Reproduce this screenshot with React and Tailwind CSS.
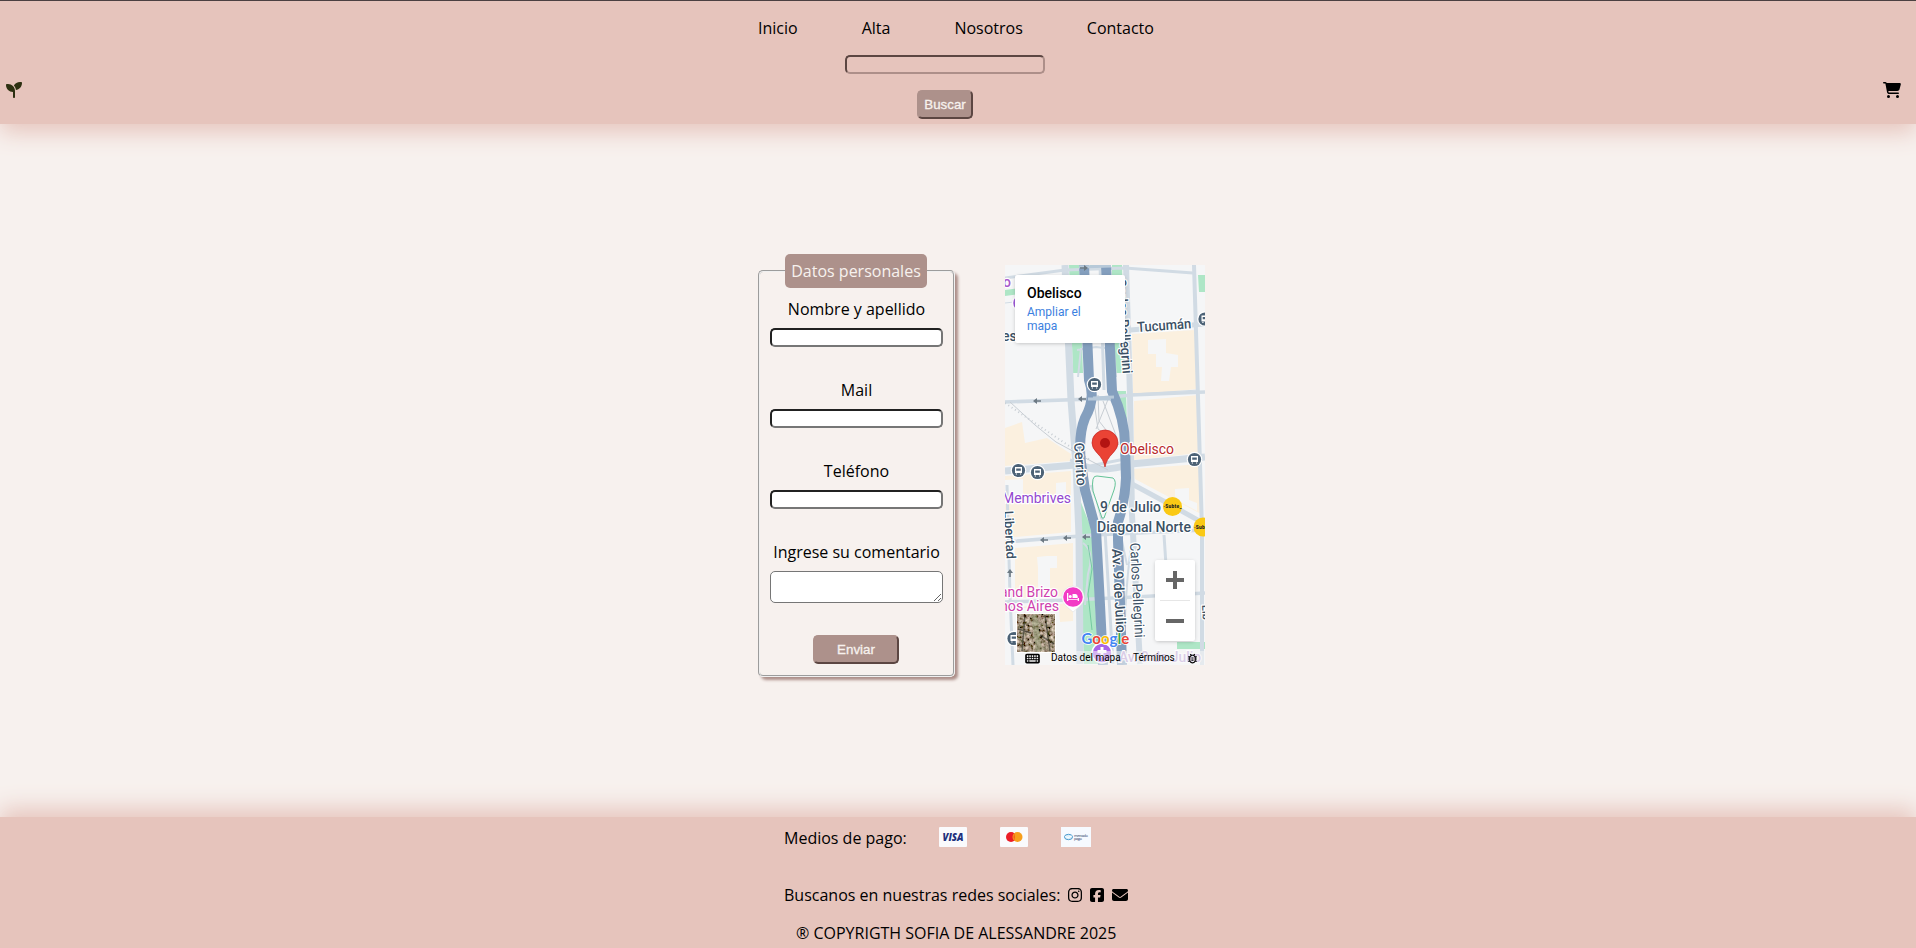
import { FaSeedling, FaCartShopping, FaInstagram, FaSquareFacebook, FaEnvelope, FaKeyboard } from 'react-icons/fa6';
import { MdOutlineBugReport } from 'react-icons/md';

const links = ['Inicio', 'Alta', 'Nosotros', 'Contacto'];

function Header() {
  return (
    <header className="z-10 flex h-[124px] shrink-0 border-t border-[#4b4041] bg-[#e6c4bc] shadow-[0_8px_22px_#e6c4bc]">
      <div className="w-[758px] pl-[6px] pt-[81px]">
        <FaSeedling className="h-4 w-4 text-[#2d3011]" />
      </div>
      <div className="w-[420px]">
        <nav className="flex gap-16 pt-[15px] text-base leading-[24px]">
          {links.map((l) => <a key={l}>{l}</a>)}
        </nav>
        <form className="ml-[87px] mt-[15px] flex w-[200px] flex-col items-center">
          <input className="h-[19px] w-full rounded-[5px] border-2 border-b-[#ad8f89] border-l-[#5c4642] border-r-[#ad8f89] border-t-[#5c4642] bg-transparent" />
          <button type="button" className="mt-4 h-[29px] w-[56px] rounded-[5px] border-2 border-b-[#5c4642] border-l-[#ad918b] border-r-[#5c4642] border-t-[#ad918b] bg-[#ad918b] font-['Liberation_Sans',sans-serif] text-[13.333px] leading-none text-[#f7f1ee] [-webkit-text-stroke:0.3px_#f7f1ee]">Buscar</button>
        </form>
      </div>
      <div className="ml-auto pr-[15px] pt-[80px]">
        <FaCartShopping className="h-[18px] w-[18px]" />
      </div>
    </header>
  );
}

function Field({ label }) {
  return (
    <label className="mb-[32px] flex flex-col items-center">
      <span className="text-base leading-[22px]">{label}</span>
      <input className="mt-[8px] h-[19px] w-[173px] rounded-[5px] border-2 border-b-[#767676] border-l-[#212121] border-r-[#767676] border-t-[#212121] bg-white" />
    </label>
  );
}

function ContactForm() {
  return (
    <form className="mt-[16px] h-[407px] w-[197px] rounded-[5px] border-2 border-[#f0f0f0] shadow-[3px_3px_3px_#ad8f89] [border-style:groove]">
      <div className="flex flex-col items-center">
        <div className="-ml-px -mt-[18px] h-[34px] w-[142px] rounded-[5px] bg-[#ad918b] text-center text-base leading-[34px] text-[#f7f1ee]">Datos personales</div>
        <div className="mt-[10px] flex flex-col items-center">
          <Field label="Nombre y apellido" />
          <Field label="Mail" />
          <Field label="Teléfono" />
          <label className="flex flex-col items-center">
            <span className="text-base leading-[22px]">Ingrese su comentario</span>
            <textarea className="mt-[8px] h-[32px] w-[173px] resize rounded-[5px] border border-[#767676] bg-white" />
          </label>
          <button type="button" className="-ml-px mt-[32px] h-[29px] w-[86px] rounded-[5px] border-2 border-b-[#5c4642] border-l-[#ad918b] border-r-[#5c4642] border-t-[#ad918b] bg-[#ad918b] font-['Liberation_Sans',sans-serif] text-[13.333px] leading-none text-[#f7f1ee] [-webkit-text-stroke:0.3px_#f7f1ee]">Enviar</button>
        </div>
      </div>
    </form>
  );
}

function Stop({ x, y }) {
  return (
    <g transform={`translate(${x} ${y})`}>
      <circle r="7.800" fill="#fff" />
      <circle r="6.600" fill="#4c6276" />
      <path d="M-3.500-3.500h7v6h-7zM-2.300-1.900v2.200h4.600v-2.200zM-2.700 3h1.200v1h-1.200zM1.500 3h1.200v1H1.500z" fill="#fff" fillRule="evenodd" />
    </g>
  );
}

function Arrow({ x, y, r = 180 }) {
  return <path d="M-4-.8H0V-3L4 0L0 3V.8H-4z" transform={`translate(${x} ${y}) rotate(${r})`} fill="#6c7983" />;
}

function MapDrawing() {
  return (
    <svg width="200" height="400" viewBox="0 0 200 400" className="block font-['Roboto',sans-serif]" fontSize="14" fontWeight="500" stroke="none">
      <defs>
        <filter id="terrain" x="0" y="0" width="1" height="1">
          <feTurbulence type="fractalNoise" baseFrequency="0.28" numOctaves="3" seed="6" />
          <feColorMatrix values="1.3 .2 0 0 -.38  1.1 .3 0 0 -.4  1 .2 0 0 -.38  0 0 0 0 1" />
        </filter>
      </defs>
      <rect width="200" height="400" fill="#f5f6f7" />
      <g fill="#fbf0df">
        <path d="M127 69L190 65L193 124L128 130zM129 136L194 130V188L129 195zM128 204L196 199V249L130 214z" />
        <path d="M0 163L17 157L20 178L42 173L66 189V196L0 201zM0 211L66 206V267L0 273zM10 283L68 278V331L10 333zM12 342L68 338V356L55 357L54 343H12z" />
      </g>
      <path d="M143 75l18-1v14l12 2v12h-7l-2 14h-8l1-14h-6v-13h-8zM32 292l10-1h10v12h-7v20h-12v-20zM0 215l18-1v22l-18 3zM51 218l10-1v20l-10 2zM170 224l14-1v12l8 3v8l-22-12z" fill="#f5f6f7" />
      <g fill="#aee6c6">
        <path d="M0 25L66 16V22L0 31zM64 0H74L78 108H68zM107 0H117L120 108H111L106 50zM110 126H121L122 162L112 142zM75 235L87 265L93 399H79L74 260zM85 0H94V4H85zM193 10H200V27H194zM172 377H200V384H172z" />
      </g>
      <g fill="none" stroke="#d1dbe4">
        <path d="M0 13L60 5L120 3L188 8" strokeWidth="3" />
        <path d="M0 38L36 34M194 125L128 129" strokeWidth="1" />
        <path d="M60 0L66 135L71 200L74 270L75 399" strokeWidth="7" />
        <path d="M121 0L125 130L127 250L135 399" strokeWidth="6" />
        <path d="M95 0L99 125M86 220L92 235L100 266L108 399" strokeWidth="3" />
        <path d="M189 0L197 265V400" strokeWidth="4" />
        <path d="M125 65L200 59" strokeWidth="5" />
        <path d="M0 137L88 134L126 130L200 127" strokeWidth="3.500" />
        <path d="M0 206L70 200Q96 209 126 199L200 192" strokeWidth="7" />
        <path d="M65 195L85 201L125 193" strokeWidth="3" />
        <path d="M127 219L164 239L200 259" strokeWidth="5" />
        <path d="M0 277L88 270L200 265M0 337L65 335L130 332L200 328" strokeWidth="3.500" />
        <path d="M2 220L5 330L8 400M159 270L161 300" strokeWidth="3" />
        <path d="M128 271Q121 305 118 399M72 85L91 82L107 84M73 112L76 83M111 112L109 86M78 278Q90 286 83 309L80 340M116 271L122 300" strokeWidth="2" />
      </g>
      <g fill="none" stroke="#c8ced4" strokeWidth="1">
        <path d="M5 137L30 160L51 177L86 196L103 205M89 137L93 164L112 178M93 130L94 156L105 170L114 180M98 136L112 173M88 171L109 183M104 132L91 164" />
        <path d="M0 138L85 195" strokeDasharray="1 3" strokeWidth="2" />
      </g>
      <g fill="none" stroke="#849fbe" strokeWidth="10">
        <path d="M79 0L84 115Q91 134 80 153Q73 170 76 198L80 225L91 265L95 340L98 400" />
        <path d="M101 0L107 126Q120 155 120 180L121 213Q120 236 113 257L113 275L117 400" />
      </g>
      <path d="M74 2L106 1M88 133L109 132M83 134L106 134" stroke="#b7c9d9" strokeWidth="3" />
      <path d="M88 226Q86 210 92 211L108 213Q112 216 109 225L99 253L97 253Z" fill="#f5f7f7" stroke="#64c397" />
      <path d="M83 280L87 304L83 329L87 365" fill="none" stroke="#64c397" strokeWidth=".8" />
      <Arrow x={79} y={3} r={0} /><Arrow x={32} y={136} /><Arrow x={77} y={134} />
      <Arrow x={39} y={275} /><Arrow x={62} y={273} /><Arrow x={81} y={272} /><Arrow x={5} y={308} r={-90} />
      <g stroke="#fff" strokeWidth="2.500" paintOrder="stroke" strokeLinejoin="round" fill="#3b5165">
        <text x="-2" y="22" fill="#a958cb">o</text>
        <text x="-3" y="76">es</text>
        <text transform="translate(132.500 67) rotate(-4)" textLength="54" lengthAdjust="spacingAndGlyphs">Tucumán</text>
        <text transform="translate(111 14) rotate(86)" textLength="95" lengthAdjust="spacingAndGlyphs">Carlos Pellegrini</text>
        <text transform="translate(69 178) rotate(86)" textLength="43" lengthAdjust="spacingAndGlyphs">Cerrito</text>
        <text x="115" y="189" fill="#b9292b" fontWeight="400" textLength="54" lengthAdjust="spacingAndGlyphs">Obelisco</text>
        <text x="-3" y="238" fill="#9349d0" fontWeight="400" textLength="69" lengthAdjust="spacingAndGlyphs">Membrives</text>
        <text x="95" y="247" textLength="61" lengthAdjust="spacingAndGlyphs">9 de Julio</text>
        <text x="92" y="267" textLength="94" lengthAdjust="spacingAndGlyphs">Diagonal Norte</text>
        <text transform="translate(-1 246) rotate(87)" textLength="48" fontSize="13" lengthAdjust="spacingAndGlyphs">Libertad</text>
        <text transform="translate(107 284) rotate(87)" textLength="84" lengthAdjust="spacingAndGlyphs">Av. 9 de Julio</text>
        <text transform="translate(125 278) rotate(87)" textLength="95" fontWeight="400" lengthAdjust="spacingAndGlyphs">Carlos Pellegrini</text>
        <text x="-5" y="332" fill="#ce3fae" fontWeight="400" textLength="58" lengthAdjust="spacingAndGlyphs">and Brizo</text>
        <text x="-5" y="346" fill="#ce3fae" fontWeight="400" textLength="59" lengthAdjust="spacingAndGlyphs">nos Aires</text>
        <text transform="translate(197 340) rotate(87)" fontSize="11">Lib</text>
      </g>
      <Stop x={200} y={54} /><Stop x={89.5} y={119.5} /><Stop x={13.5} y={205.5} /><Stop x={32.5} y={207.5} /><Stop x={189.5} y={194.5} /><Stop x={9} y={373.5} />
      <circle cx="16" cy="38" r="8.500" fill="#a05bdc" stroke="#fff" strokeWidth="1.500" />
      <g fontSize="4.800" fontWeight="900" fill="#222">
        <circle cx="167.500" cy="241.500" r="9.500" fill="#fac915" />
        <text x="158.500" y="243" textLength="18">·Subte_</text>
        <circle cx="198" cy="262" r="9.500" fill="#fac915" />
        <text x="189" y="263.500" textLength="18">·Subte_</text>
      </g>
      <path d="M100 202Q98.500 194 92.500 188.500Q87 183 87 178A13 13 0 0 1 113 178Q113 183 107.500 188.500Q101.500 194 100 202Z" fill="#ea4335" stroke="#c5221f" strokeWidth=".7" />
      <circle cx="100" cy="178" r="5" fill="#b31412" />
      <g transform="translate(68 332)">
        <path d="M0 15L-7 9A11.200 11.200 0 1 1 7 9Z" fill="#fff" stroke="#ddd" strokeWidth=".5" />
        <circle r="9.800" fill="#f23bc5" />
        <path d="M-6-4h1.300v6h9.400V-.5Q4.700-3 2.500-3H-.5v4H6v3H4.700V2.700h-9.400V4H-6zM-2.700-2a1.500 1.500 0 1 1 0 3a1.500 1.500 0 1 1 0-3z" fill="#fff" />
      </g>
      <g transform="translate(97 388)">
        <circle r="10" fill="#a864e8" stroke="#fff" strokeWidth="1.500" />
        <path d="M-1.500-6h3v3h3v3h-3v4h-3v-4h-3v-3h3z" fill="#fff" />
      </g>
      <text x="114" y="397" fill="#b99bd5" stroke="#fff" strokeWidth="2" paintOrder="stroke" textLength="82" lengthAdjust="spacingAndGlyphs">Av. 9 de Julio</text>
      <rect x="20" y="386" width="180" height="14" fill="#f5f5f5" opacity=".55" />
      <g fontSize="15" fontFamily="Lato, sans-serif" fontWeight="700" stroke="#fff" strokeWidth="1.500" paintOrder="stroke">
        <text y="378.500" x="76.500"><tspan fill="#4285f4">G</tspan><tspan fill="#ea4335">o</tspan><tspan fill="#fbbc05">o</tspan><tspan fill="#4285f4">g</tspan><tspan fill="#34a853">l</tspan><tspan fill="#ea4335">e</tspan></text>
      </g>
      <rect x="11" y="348" width="40" height="40" rx="1" fill="#fff" />
      <rect x="12.500" y="349.500" width="37" height="37" filter="url(#terrain)" />
      <path d="M29 350L34 386" stroke="#8f9a74" strokeWidth="6" opacity=".5" />
      <path d="M13 364L26 368M35 370L49 379M20 350L17 386M40 350L45 386" stroke="#25291f" strokeWidth="1.500" opacity=".6" />
    </svg>
  );
}

function MapPanel() {
  return (
    <div className="relative mt-[11px] h-[400px] w-[200px] overflow-hidden font-['Roboto',sans-serif]">
      <MapDrawing />
      <div className="absolute left-[10px] top-[10px] h-[68px] w-[110px] rounded-[2px] bg-white px-3 pt-[9px] shadow-[0_1px_4px_-1px_#0000004d]">
        <div className="text-[14px] font-medium leading-[18px] text-black">Obelisco</div>
        <a className="mt-[3px] block w-[70px] text-[12px] leading-[14px] text-[#3b7fe0]">Ampliar el mapa</a>
      </div>
      <div className="absolute left-[150px] top-[295px] h-[81px] w-[40px] rounded-[2px] bg-white shadow-[0_1px_4px_-1px_#0000004d]">
        <svg width="40" height="81" fill="#666"><path d="M11 18h7V11h4v7h7v4h-7v7h-4v-7H11zM11 59h18v4H11z" /><path d="M5 40h30v1H5z" fill="#e6e6e6" /></svg>
      </div>
      <div className="absolute bottom-0 left-0 flex h-[14px] w-full items-center text-[10px] leading-[14px] text-black">
        <FaKeyboard className="ml-[20px] h-[13px] w-[15px]" />
        <span className="ml-[11px] w-[70px] whitespace-nowrap">Datos del mapa</span>
        <span className="ml-[12px] w-[41px]">Términos</span>
        <MdOutlineBugReport className="ml-[12px] h-[13px] w-[13px]" />
      </div>
    </div>
  );
}

function Footer() {
  return (
    <footer className="z-10 h-[131px] shrink-0 bg-[#e6c4bc] pl-[784px] shadow-[0_-8px_22px_#e6c4bc]">
      <div className="flex h-[40px] items-center">
        <span className="w-[155px] pt-[2px] leading-[22px]">Medios de pago:</span>
        <svg className="mr-[33px]" width="28" height="20" viewBox="0 0 28 20"><rect width="28" height="20" rx="1" fill="#fafafc" /><text x="3.500" y="13.500" fill="#20307d" fontFamily="Open Sans, sans-serif" fontSize="10" fontWeight="800" fontStyle="italic" textLength="21" lengthAdjust="spacingAndGlyphs">VISA</text></svg>
        <svg className="mr-[33px]" width="28" height="20" viewBox="0 0 28 20"><rect width="28" height="20" rx="1" fill="#fafafc" /><circle cx="11" cy="10" r="5" fill="#eb1c26" /><circle cx="17.500" cy="10" r="5" fill="#f79e1b" /><path d="M14.250 6.200Q16 10 14.250 13.800Q12.500 10 14.250 6.200" fill="#f2601e" /></svg>
        <svg width="30" height="20" viewBox="0 0 30 20"><rect width="30" height="20" fill="#f6faff" /><ellipse cx="7.500" cy="10" rx="4" ry="2.700" fill="#d8effb" stroke="#4c9bcf" /><path d="M4 9.500L7 10.500L11 9" fill="none" stroke="#fff" strokeWidth="1" /><g fill="#66728f" fontFamily="Open Sans, sans-serif" fontSize="4" fontWeight="600"><text x="13" y="9.600" textLength="14">mercado</text><text x="13" y="12.600" textLength="8">pago</text></g></svg>
      </div>
      <div className="mt-[27px] flex h-[22px] items-center text-base leading-[22px]">
        <span className="w-[283px] whitespace-nowrap">Buscanos en nuestras redes sociales:</span>
        <FaInstagram className="h-4 w-4" />
        <FaSquareFacebook className="ml-[6px] h-4 w-4" />
        <FaEnvelope className="ml-[7px] h-4 w-4" />
      </div>
      <p className="ml-3 mt-4 text-base leading-[22px]">® COPYRIGTH SOFIA DE ALESSANDRE 2025</p>
    </footer>
  );
}

export default function App() {
  return (
    <div className="flex h-[948px] w-[1916px] flex-col overflow-hidden bg-[#f7f1ee] font-['Open_Sans',sans-serif] text-black">
      <Header />
      <main className="flex flex-1 items-start gap-[50px] pl-[758px] pt-[130px]">
        <ContactForm />
        <MapPanel />
      </main>
      <Footer />
    </div>
  );
}
